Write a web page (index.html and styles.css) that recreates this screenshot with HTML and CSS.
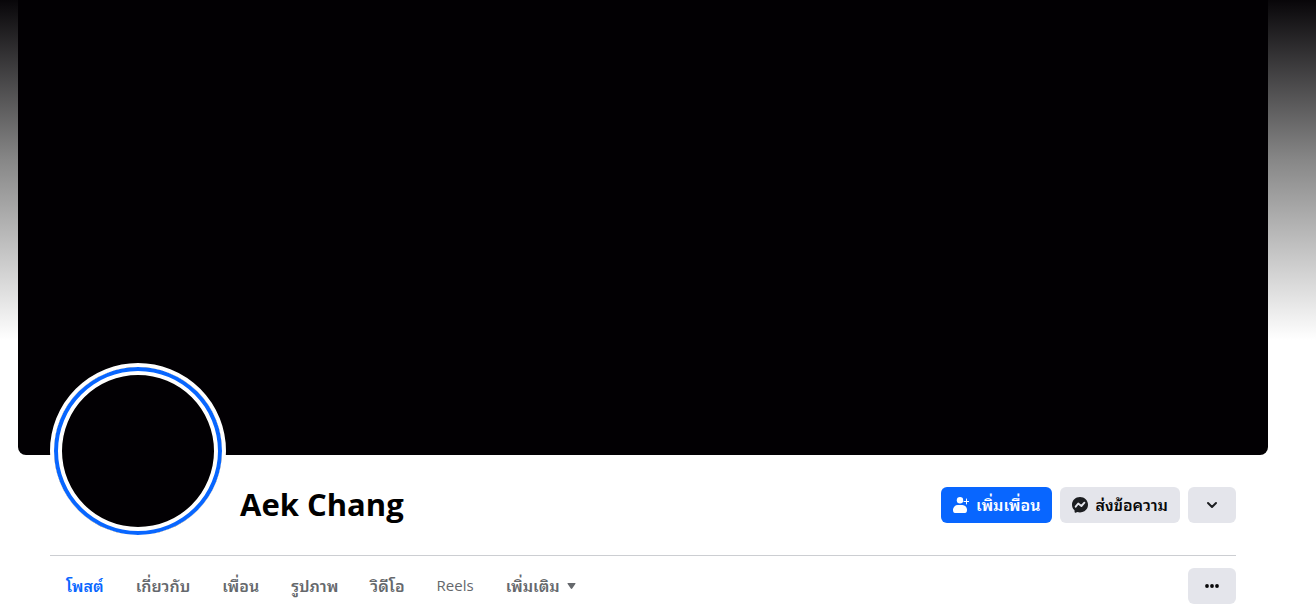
FILE: index.html
```html
<!DOCTYPE html>
<html lang="th">
<head>
<meta charset="utf-8">
<meta name="viewport" content="width=device-width, initial-scale=1">
<title>Aek Chang</title>
<link rel="stylesheet" href="styles.css">
</head>
<body>
<div class="page">
  <header class="profile">
    <div class="cover"></div>
    <div class="inner">
      <div class="identity">
        <div class="avatar"></div>
        <h1 class="name">Aek Chang</h1>
        <div class="actions">
          <button class="btn btn-primary" type="button">
            <svg class="icon" viewBox="0 0 16 16" fill="currentColor" aria-hidden="true">
              <circle cx="7" cy="3.300" r="3.200"/>
              <path d="M5 8h4.400a4.800 4.800 0 0 1 4.600 5c0 2-.7 3-2 3H2c-1.300 0-2-1-2-3a4.800 4.800 0 0 1 5-5z"/>
              <path d="M13.500 2v5M11 4.500h5" stroke="currentColor" stroke-width="1" stroke-linecap="round"/>
            </svg>
            <span class="label">เพิ่มเพื่อน</span>
          </button>
          <button class="btn" type="button">
            <svg class="icon" viewBox="0 0 16 16" aria-hidden="true">
              <path fill="#1c1e21" d="M8 0C3.500 0 0 3.300 0 7.700c0 2.300 1 4.200 2.500 5.600l.1 1.800c0 .6.600.9 1.100.7l1.600-.7c.9.200 1.700.3 2.700.3 4.500 0 8-3.300 8-7.700S12.500 0 8 0z"/>
              <path d="M3.700 9.700 6.200 6.500l3.200 2.500 3-3.300" fill="none" stroke="#e4e5eb" stroke-width="1.900" stroke-linecap="round" stroke-linejoin="round"/>
            </svg>
            <span class="label">ส่งข้อความ</span>
          </button>
          <button class="btn btn-square" type="button" aria-label="ตัวเลือก">
            <svg class="icon" viewBox="0 0 16 16" aria-hidden="true">
              <path d="m4 6 4 4 4-4" fill="none" stroke="#1c1e21" stroke-width="2" stroke-linecap="round" stroke-linejoin="round"/>
            </svg>
          </button>
        </div>
      </div>
      <div class="bar">
        <nav class="tabs">
          <a class="tab tab-active" href="#posts"><span class="label">โพสต์</span></a>
          <a class="tab" href="#about"><span class="label">เกี่ยวกับ</span></a>
          <a class="tab" href="#friends"><span class="label">เพื่อน</span></a>
          <a class="tab" href="#photos"><span class="label">รูปภาพ</span></a>
          <a class="tab" href="#videos"><span class="label">วิดีโอ</span></a>
          <a class="tab tab-latin" href="#reels"><span class="label">Reels</span></a>
          <a class="tab" href="#more"><span class="label">เพิ่มเติม</span>
            <svg class="caret" viewBox="0 0 8 6" fill="currentColor" aria-hidden="true"><path d="M.8 0h6.400c.8 0 1 .6.600 1.100L4.700 5.500c-.4.500-1 .5-1.400 0L.2 1.100C-.2.600 0 0 .8 0z"/></svg>
          </a>
        </nav>
        <button class="btn btn-square" type="button" aria-label="เพิ่มเติม">
          <svg class="icon" viewBox="0 0 16 16" fill="#080809" aria-hidden="true">
            <circle cx="3" cy="8" r="1.900"/><circle cx="8" cy="8" r="1.900"/><circle cx="13" cy="8" r="1.900"/>
          </svg>
        </button>
      </div>
    </div>
  </header>
</div>
</body>
</html>
```
FILE: styles.css
```css
* { box-sizing: border-box; }

body {
  margin: 0;
  background: #fff;
  color: #080809;
  font-family: Tahoma, "Noto Sans Thai Looped", Loma, Waree, "Tlwg Typo", Garuda, "Noto Sans", sans-serif;
}

.page {
  padding-right: 30px;
  background: linear-gradient(#080609, #878787 160px, #fff 340px) no-repeat;
}

.profile {
  max-width: 1250px;
  margin: 0 auto;
}

.cover {
  height: 455px;
  background: #020003;
  border-radius: 0 0 8px 8px;
}

.inner { padding: 0 32px; }

.identity {
  display: flex;
  align-items: center;
  height: 100px;
  gap: 14px;
}

.avatar {
  flex: none;
  width: 176px;
  height: 176px;
  margin-top: -108px;
  border: 4px solid #fff;
  border-radius: 50%;
  background: #020003;
  box-shadow: inset 0 0 0 4px #0866ff, inset 0 0 0 8px #fff;
}

.name {
  flex: 1;
  margin: 0;
  padding-bottom: 2px;
  color: #000;
  font-family: "Open Sans", "Noto Sans", sans-serif;
  font-size: 31px;
  line-height: 38px;
  font-weight: 700;
}

.actions {
  display: flex;
  gap: 8px;
}

.btn {
  display: flex;
  align-items: center;
  justify-content: center;
  gap: 7px;
  height: 36px;
  padding: 0 12px;
  border: 0;
  border-radius: 6px;
  background: #e4e5eb;
  color: #080809;
  font: inherit;
  font-size: 16px;
  line-height: 20px;
  font-weight: 600;
  white-space: nowrap;
  cursor: pointer;
}

.btn-primary {
  background: #0866ff;
  color: #fff;
}

.btn-square { width: 48px; }

.label { padding-bottom: 2px; }

.icon {
  flex: none;
  width: 16px;
  height: 16px;
}

.bar {
  display: flex;
  align-items: center;
  justify-content: space-between;
  border-top: 1px solid #ccced2;
}

.tabs { display: flex; }

.tab {
  display: flex;
  align-items: center;
  gap: 7px;
  height: 60px;
  padding: 0 16px;
  color: #65686c;
  font-size: 16px;
  line-height: 20px;
  font-weight: 600;
  text-decoration: none;
  white-space: nowrap;
}

.tab-active { color: #0866ff; }

.tab-latin {
  font-family: "Open Sans", sans-serif;
  font-size: 15px;
  font-weight: 500;
}

.caret {
  width: 9px;
  height: 6px;
}
```
